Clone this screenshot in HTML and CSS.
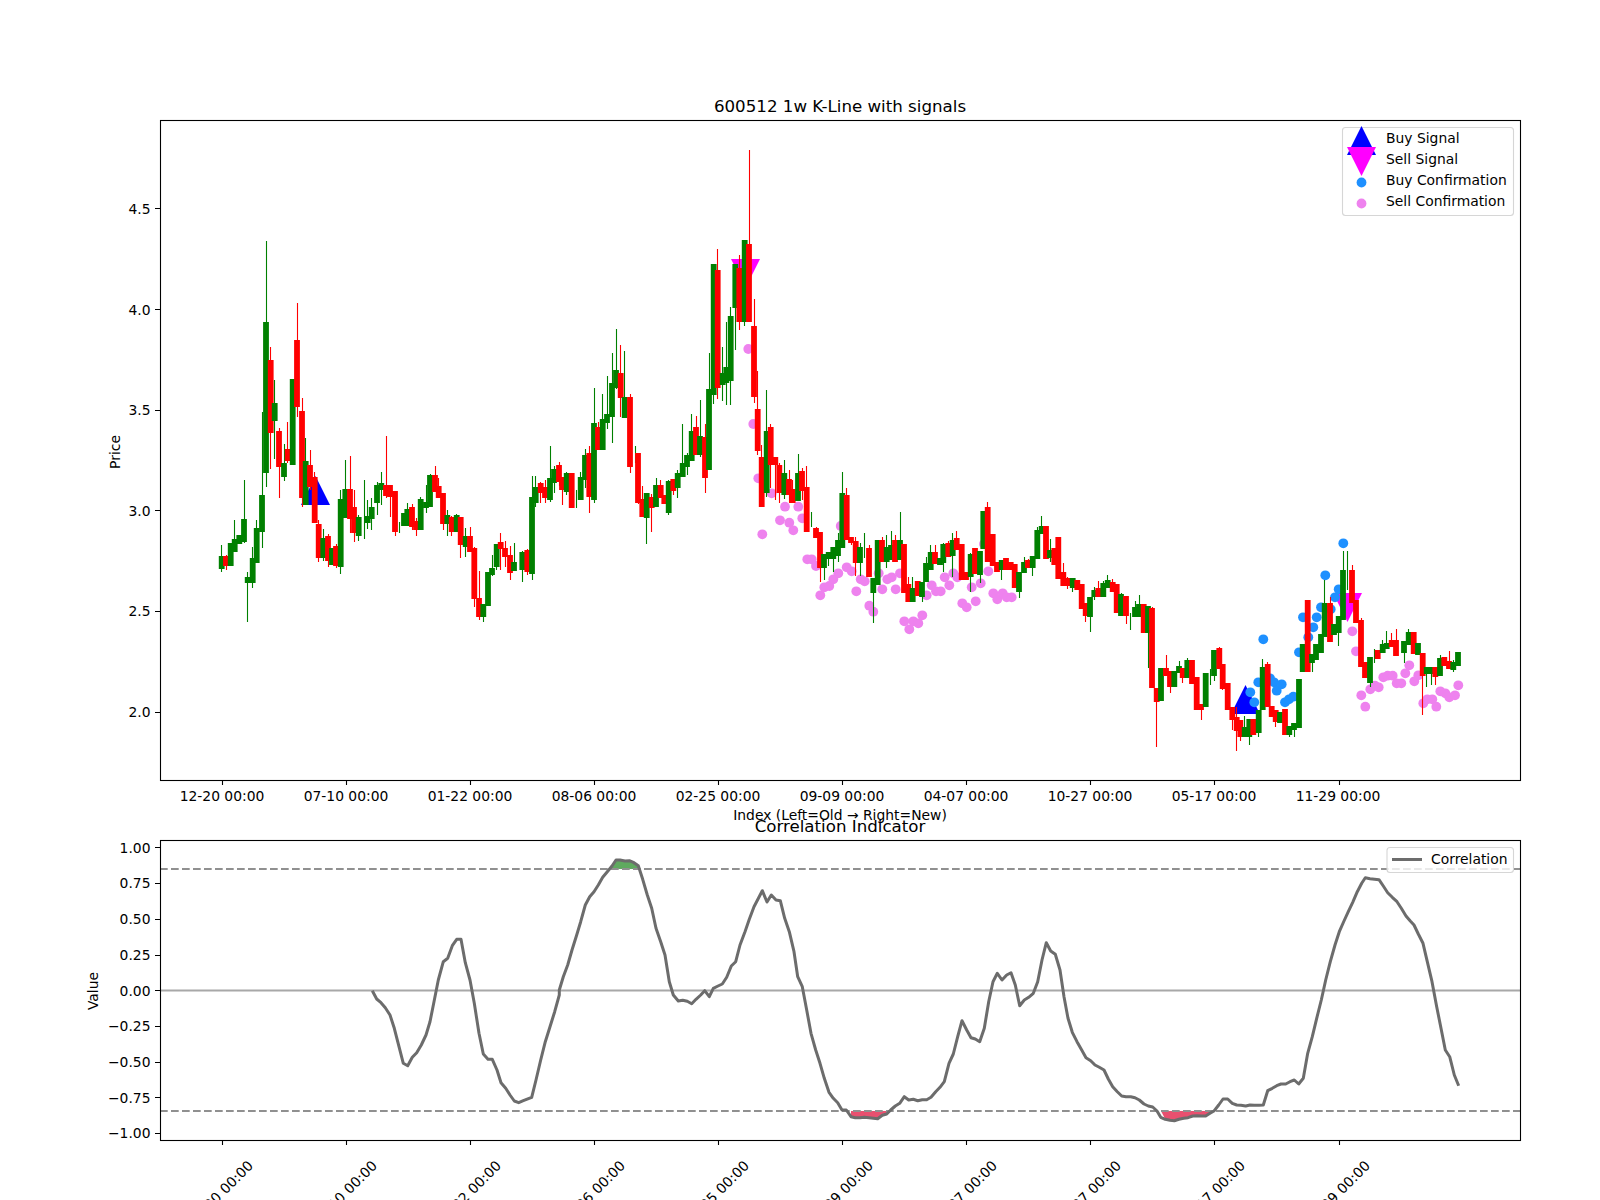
FILE: index.html
```html
<!DOCTYPE html>
<html lang="en">
<head>
<meta charset="utf-8">
<title>600512 1w K-Line with signals</title>
<link rel="stylesheet" href="styles.css">
</head>
<body>
<main class="figure">
<svg class="plot" width="1600" height="1200" viewBox="0 0 1600 1200" xmlns="http://www.w3.org/2000/svg">
  <g id="price">
    <polygon class="buy-mark" points="301,505 330,505 315.5,476"/>
    <polygon class="buy-mark" points="1231,714 1260,714 1245.5,685"/>
    <polygon class="sell-mark" points="731,259 760,259 745.5,288"/>
    <polygon class="sell-mark" points="1333,593 1362,593 1347.5,622"/>
  </g>
  <rect class="frame" x="160.5" y="120.5" width="1360" height="660"/>
  <path class="frame" d="M222.5 780v5M346.5 780v5M470.5 780v5M594.5 780v5M718.5 780v5M842.5 780v5M966.5 780v5M1090.5 780v5M1214.5 780v5M1339.5 780v5M155 208.5h5M155 309.5h5M155 410.5h5M155 510.5h5M155 611.5h5M155 712.5h5"/>
  <g class="tick x-ticks">
    <text x="222" y="801">12-20 00:00</text><text x="346" y="801">07-10 00:00</text><text x="470" y="801">01-22 00:00</text><text x="594" y="801">08-06 00:00</text><text x="718" y="801">02-25 00:00</text><text x="842" y="801">09-09 00:00</text><text x="966" y="801">04-07 00:00</text><text x="1090" y="801">10-27 00:00</text><text x="1214" y="801">05-17 00:00</text><text x="1338" y="801">11-29 00:00</text>
  </g>
  <g class="tick y-ticks">
    <text x="150.5" y="213.5">4.5</text><text x="150.5" y="314.5">4.0</text><text x="150.5" y="415">3.5</text><text x="150.5" y="515.5">3.0</text><text x="150.5" y="616">2.5</text><text x="150.5" y="716.5">2.0</text>
  </g>
  <text class="tick y-label" transform="translate(120 452) rotate(-90)">Price</text>
  <text class="title" x="840" y="112">600512 1w K-Line with signals</text>
  <text class="tick x-label" x="840" y="820">Index (Left=Old → Right=New)</text>

  <rect class="legend-box" x="1342.5" y="127.5" width="171" height="88" rx="3"/>
  <polygon class="buy-mark" points="1347,155 1376,155 1361.5,126"/>
  <polygon class="sell-mark" points="1347,147 1376,147 1361.5,176"/>
  <circle class="buy-dot" cx="1361.5" cy="182.5" r="4.9"/>
  <circle class="sell-dot" cx="1361.5" cy="203.5" r="4.9"/>
  <g class="tick legend-text">
    <text x="1386" y="143">Buy Signal</text><text x="1386" y="164">Sell Signal</text><text x="1386" y="185">Buy Confirmation</text><text x="1386" y="206">Sell Confirmation</text>
  </g>

  <text class="title" x="840" y="832">Correlation Indicator</text>
  <g id="corr">
    <polygon id="fill-high" class="fill-high"/>
    <polygon id="fill-low-a" class="fill-low"/>
    <polygon id="fill-low-b" class="fill-low"/>
    <path class="zero" d="M160 990.5H1520"/>
    <path class="guide" d="M160 869H1520M160 1111H1520"/>
    <polyline id="corr-line" class="corr-line"/>
  </g>
  <rect class="frame" x="160.5" y="840.5" width="1360" height="300"/>
  <path class="frame" d="M222.5 1140v5M346.5 1140v5M470.5 1140v5M594.5 1140v5M718.5 1140v5M842.5 1140v5M966.5 1140v5M1090.5 1140v5M1214.5 1140v5M1339.5 1140v5M155 847.5h5M155 883.5h5M155 919.5h5M155 955.5h5M155 990.5h5M155 1026.5h5M155 1062.5h5M155 1097.5h5M155 1133.5h5"/>
  <g class="tick y-ticks">
    <text x="150.5" y="852.5">1.00</text><text x="150.5" y="888">0.75</text><text x="150.5" y="923.5">0.50</text><text x="150.5" y="960">0.25</text><text x="150.5" y="995.5">0.00</text><text x="150.5" y="1031">−0.25</text><text x="150.5" y="1066.5">−0.50</text><text x="150.5" y="1102.5">−0.75</text><text x="150.5" y="1138">−1.00</text>
  </g>
  <text class="tick y-label" transform="translate(98 991) rotate(-90)">Value</text>
  <g class="tick x-ticks">
    <text transform="translate(220.5 1193) rotate(-45)" y="5">12-20 00:00</text>
    <text transform="translate(344.5 1193) rotate(-45)" y="5">07-10 00:00</text>
    <text transform="translate(468.5 1193) rotate(-45)" y="5">01-22 00:00</text>
    <text transform="translate(592.5 1193) rotate(-45)" y="5">08-06 00:00</text>
    <text transform="translate(716.5 1193) rotate(-45)" y="5">02-25 00:00</text>
    <text transform="translate(840.5 1193) rotate(-45)" y="5">09-09 00:00</text>
    <text transform="translate(964.5 1193) rotate(-45)" y="5">04-07 00:00</text>
    <text transform="translate(1088.5 1193) rotate(-45)" y="5">10-27 00:00</text>
    <text transform="translate(1212.5 1193) rotate(-45)" y="5">05-17 00:00</text>
    <text transform="translate(1337.5 1193) rotate(-45)" y="5">11-29 00:00</text>
  </g>
  <rect class="legend-box" x="1387" y="847.5" width="126.5" height="25" rx="3"/>
  <path class="corr-line" d="M1392 859.5h30"/>
  <text class="tick legend-text" x="1431" y="864">Correlation</text>
</svg>
</main>
<script src="chart.js"></script>
</body>
</html>
```
FILE: styles.css
```css
html, body {
  margin: 0;
  padding: 0;
  background: #fff;
}
.figure {
  width: 1600px;
  height: 1200px;
  overflow: hidden;
}
.plot {
  display: block;
  font-family: "DejaVu Sans", sans-serif;
}
.frame {
  fill: none;
  stroke: #000;
  stroke-width: 1.1;
}
.tick {
  font-size: 13.89px;
  fill: #000;
}
.x-ticks, .x-label, .y-label {
  text-anchor: middle;
}
.y-ticks {
  text-anchor: end;
}
.legend-text {
  text-anchor: start;
}
.title {
  font-size: 16.67px;
  fill: #000;
  text-anchor: middle;
}
.legend-box {
  fill: rgba(255, 255, 255, 0.8);
  stroke: #d6d6d6;
  stroke-width: 1.1;
}
.buy-mark {
  fill: #0000ff;
}
.sell-mark {
  fill: #ff00ff;
}
.buy-dot {
  fill: #1e90ff;
}
.sell-dot {
  fill: #ee82ee;
}
.wick-g {
  stroke: #008000;
  stroke-width: 1.1;
}
.wick-r {
  stroke: #ff0000;
  stroke-width: 1.1;
}
.body-g {
  fill: #008000;
}
.body-r {
  fill: #ff0000;
}
.zero {
  stroke: #a8a8a8;
  stroke-width: 2.08;
  fill: none;
}
.guide {
  stroke: #909090;
  stroke-width: 2.08;
  stroke-dasharray: 7.7 3.3;
  fill: none;
}
.corr-line {
  stroke: #6c6c6c;
  stroke-width: 3;
  stroke-linejoin: round;
  fill: none;
}
.fill-high {
  fill: #5faa5f;
}
.fill-low {
  fill: #e8506f;
}
```
FILE: chart.js
```js
// Weekly candles: x, colour, body top, body bottom, wick top, wick bottom (plot pixels).
const CANDLES = `
221.7 g 556 569 545 572
226 r 556 566 555 570
230.7 g 543 566 543 566
234.7 g 539 552 520 552
239.3 g 535 544 535 544
244 g 519 542 480 543
247.7 g 577 583 572 622
252.7 g 558 583 547 588
256.7 g 528 563 520 563
262 g 495 532 412 548
266 g 322 473 241 487
270.7 r 360 433 347 469
274.7 g 403 421 380 459
279 r 431 467 428 498
284 g 463 477 444 481
287.7 r 449 461 422 463
292.7 g 379 465 379 465
297 r 340 407 303 417
302 r 411 498 398 507
305.7 g 461 505 438 505
310 r 465 487 450 490
314.7 r 477 523 472 523
318.7 r 524 558 520 562
323.3 g 538 558 529 561
328 r 536 561 534 567
332 g 548 565 548 565
336 r 546 566 544 568
340.7 g 499 567 490 574
345.3 g 489 518 460 518
350 r 489 519 456 533
354 r 507 533 490 542
358.7 g 517 536 515 541
364 g 516 516 480 539
367.7 g 516 523 500 529
371.7 g 507 519 498 530
377 g 485 503 482 515
381.3 g 483 490 472 505
386 r 485 496 436 498
390 r 485 497 485 517
395 r 491 532 491 536
399.3 g 524 524 522 533
404 g 513 526 513 526
407.3 g 509 526 503 526
412 r 507 527 504 530
416 r 521 530 518 536
420.7 g 499 530 497 530
426 g 502 508 485 513
430 g 475 507 474 507
435 r 475 492 466 492
438.7 r 486 498 478 498
443 r 493 524 493 530
447.3 g 515 524 510 536
451.7 r 517 532 516 536
456.7 g 515 532 514 532
460.7 r 517 545 517 558
465.7 g 536 547 528 557
470 r 536 552 527 552
474.3 r 548 599 547 607
479 r 598 617 571 620
483.3 g 604 617 604 622
488 g 572 606 572 606
492 g 568 575 555 576
496.7 g 544 567 544 570
500.7 r 542 549 533 570
505 r 548 557 541 567
510 r 555 573 546 580
514 g 562 571 543 571
522.3 g 552 570 551 582
527.3 r 550 572 549 575
532 g 497 574 476 580
535.7 g 487 503 476 507
540.7 r 483 493 482 503
545 r 487 498 480 503
550 g 478 500 446 502
554 g 469 483 466 493
559 r 465 482 462 486
562 r 477 490 477 505
566.7 g 473 492 472 495
571.7 r 473 508 473 508
576.7 g 490 490 490 508
580.7 g 477 500 472 500
585 g 455 480 449 488
589.3 r 453 497 446 513
594 g 423 500 388 503
598 r 427 450 422 450
602.7 g 419 450 394 450
607 g 414 423 376 429
612 g 383 417 353 443
616 g 370 388 329 389
620.7 r 373 398 345 417
624.7 g 397 418 351 418
630 r 397 467 394 473
635 g 446 446 446 463
638 r 453 503 453 504
642.3 r 499 517 486 517
646.7 g 493 518 493 544
651.7 r 497 508 494 532
656 g 485 507 478 507
660.7 r 485 498 480 498
664.3 r 495 504 495 504
668.7 g 481 513 480 515
673.3 r 479 491 479 495
677.7 g 473 488 470 498
682.7 g 463 477 424 477
687 g 455 467 453 475
691.7 g 431 461 414 461
696 r 427 455 416 455
700 g 436 455 400 457
705 r 437 478 424 493
709 g 389 470 353 470
713.7 g 264 395 264 404
717.7 r 270 388 249 399
722.7 g 373 385 347 401
726.3 g 367 383 322 405
730.7 g 316 381 307 405
735.3 g 264 308 264 350
739.3 r 268 322 255 330
744.7 g 240 322 240 326
749 r 244 322 150 322
754 r 326 397 299 403
757.7 r 409 451 371 455
761.7 r 457 507 445 507
766.7 g 431 493 390 497
770.7 r 427 465 424 488
775.3 r 457 465 457 500
779.3 r 465 493 463 503
784.3 g 473 495 460 499
789 r 479 495 470 503
792.7 r 489 503 480 503
798 g 473 501 454 501
802 r 471 491 468 500
806.7 r 487 532 466 532
811 g 512 512 512 527
816 r 528 538 527 538
820 r 532 568 532 582
824 g 554 568 554 580
828.7 g 552 559 552 566
833.3 g 547 559 547 572
838 g 540 556 533 562
842.3 g 493 548 472 548
846.7 r 495 540 488 540
851 r 537 543 537 545
855.7 r 541 563 537 576
860 g 547 563 543 576
864 g 533 533 533 558
869 r 548 577 545 577
873.3 g 578 593 578 623
877.7 g 540 585 540 585
882 r 540 562 537 562
886.7 g 547 562 535 568
891 g 545 560 531 560
895 r 540 562 535 562
900 g 540 560 512 560
904 r 544 593 544 593
908.3 r 584 602 577 602
912.7 g 588 602 577 602
917.7 r 581 596 581 596
922 g 582 597 582 602
926 g 563 582 557 582
930.7 g 552 570 545 570
935 r 552 564 545 564
940 g 558 565 558 565
943.3 g 544 563 543 572
948.3 r 543 557 541 557
952.7 g 540 556 533 577
956.7 r 538 550 531 550
961.7 r 544 580 544 580
966 r 572 580 572 580
970.7 g 554 577 553 592
975 r 548 574 548 574
980 g 551 575 551 583
983.3 g 511 549 511 549
987.7 r 507 562 502 562
992.7 r 534 566 534 566
997 r 562 572 562 572
1001.7 g 560 570 560 580
1006 r 558 570 558 570
1010.7 r 562 570 562 570
1014.7 r 564 588 564 588
1019 g 572 592 572 598
1024 g 562 573 557 573
1028 r 560 568 559 568
1032.7 g 556 568 556 576
1037.3 g 530 559 527 559
1041.7 g 526 534 516 534
1046 r 526 559 526 559
1050 g 550 558 539 562
1054.3 r 548 565 548 565
1058.3 r 537 579 537 579
1063.3 r 572 586 563 586
1067.7 r 578 586 577 589
1072.7 g 578 588 578 592
1077.3 r 580 590 580 590
1081.7 r 584 609 584 609
1085.7 r 603 616 603 622
1090 g 597 617 597 632
1094.3 g 590 597 587 600
1098.3 r 588 597 581 597
1103.3 g 583 597 581 597
1107.7 g 580 588 575 588
1112.7 r 582 592 579 592
1116.7 r 584 613 584 613
1121 g 594 616 593 616
1126 r 596 616 596 624
1130.3 g 613 613 613 630
1135 g 607 617 601 617
1139 g 604 617 595 617
1143.7 r 604 633 604 633
1148 g 606 633 606 668
1152 r 608 688 607 688
1156.7 r 688 702 688 747
1161 g 668 701 668 701
1166 r 668 676 655 676
1170 r 671 687 671 693
1174.3 g 671 687 671 687
1179 g 666 673 661 673
1182.7 r 668 678 668 683
1187.3 g 660 678 658 678
1192 r 660 684 660 684
1196.7 r 677 710 677 710
1201 r 704 710 704 720
1205.7 g 673 707 673 707
1210 g 669 669 669 685
1214 g 650 676 650 681
1219.3 r 648 669 647 669
1222.7 r 664 689 664 690
1227.7 r 683 710 683 710
1232.3 r 707 720 707 730
1236.7 r 717 731 707 751
1240.3 r 720 737 720 741
1244.7 g 727 737 716 737
1249.3 g 719 737 719 745
1253.3 r 719 735 719 735
1258.7 g 710 733 710 737
1262.7 g 667 710 659 710
1267.7 r 664 707 662 707
1271.7 r 706 717 706 717
1275.7 r 710 722 710 727
1280 g 712 723 712 723
1285 r 709 735 709 735
1289.3 g 726 735 726 737
1294 g 723 730 723 737
1299 g 679 728 679 728
1302.7 g 644 672 644 672
1307.7 r 600 672 600 672
1312 g 654 663 654 672
1316 g 644 660 644 660
1321 g 634 653 634 653
1324.7 g 603 637 580 637
1330 r 603 642 597 642
1334 g 624 635 624 635
1338.7 g 616 633 616 646
1343 g 570 620 551 620
1347 g 551 551 551 590
1352 r 570 603 565 603
1356 r 600 623 600 623
1361 r 620 667 618 667
1365 r 662 678 662 678
1370 g 657 683 657 687
1374.7 g 649 649 649 663
1377.7 r 650 659 650 659
1382.7 g 644 653 640 653
1386.7 g 643 649 631 649
1391.7 r 640 647 633 647
1396 r 640 656 629 656
1404 g 641 653 641 663
1408.7 g 632 645 629 645
1413.7 r 632 654 632 654
1418 g 643 655 643 655
1422.7 r 653 676 653 715
1426.7 g 667 674 667 687
1431.3 g 667 674 667 685
1435.3 r 667 677 667 685
1440 g 658 676 655 676
1444.3 r 657 666 657 666
1449 r 661 669 651 669
1453.3 g 662 670 660 672
1458 g 652 666 652 666
`;

const SELL_DOTS = [[748.3,349],[753.3,424],[758.3,478.3],[762.3,534.3],[771.7,493.3],[785,506.7],[798.3,506.7],[780,520.3],[789.3,522.7],[793.3,530.3],[802.3,518.3],[807.3,559.3],[811.7,559.3],[816,566],[820.3,595.3],[824.3,587.3],[829.3,586],[833.3,579.3],[838.3,573.3],[846.7,567.3],[851.7,571.3],[840.7,526],[856.3,591.3],[860.7,579.3],[864.7,581.3],[869.3,605.7],[873.3,611.7],[878.7,573.3],[882.3,589.3],[887.3,579.3],[891.7,577.3],[895.7,589.3],[900,573.3],[904.3,621.3],[909.3,629.3],[913.3,621.3],[918.3,623.3],[922.3,615.3],[926.7,595.3],[931.7,585.3],[936,591.3],[940.7,591.3],[944.7,577.3],[949.3,585.3],[953.3,573.3],[957.3,577.3],[962.3,603.3],[966.7,607.3],[971.7,587.3],[975.7,601.3],[980.7,583.3],[984,544],[988.3,571.3],[993.3,593.3],[997.3,599.3],[1002.7,593.3],[1006.7,597.3],[1011.7,597.3],[1352.3,631.3],[1356,651.3],[1361.3,695.3],[1365.3,706.7],[1370.3,689.3],[1375,685.7],[1378.7,687.3],[1383.3,677.3],[1387.7,675.7],[1392.7,675.7],[1396.7,683.3],[1401.3,683.3],[1405.3,673.3],[1409.3,665.3],[1414.3,681.3],[1418.3,675.3],[1423.3,703.3],[1427.3,699.3],[1432.3,699.3],[1436.3,706.7],[1440.3,691.3],[1445.3,693.3],[1449.3,697.3],[1455,695.3],[1458.3,685.3]];

const BUY_DOTS = [[1263.3,639.3],[1258.3,682.3],[1250.3,692.3],[1254.3,702.3],[1270,678.3],[1274,682.3],[1276.7,690.7],[1281.7,684.3],[1285,702.3],[1289,699.3],[1293.3,696.7],[1299,652.3],[1303,617.3],[1308.3,637.3],[1313.3,627.3],[1316.7,617.3],[1321,607.3],[1325.3,575.3],[1330.7,609.3],[1335,597.3],[1338.7,589.3],[1343.3,543.3]];

// Correlation curve, sampled at 3x in three spans: [left, top, points].
const CORR = [
  [60, 780, [937,632,950,657,963,668,976,683,990,705,1003,745,1017,800,1030,850,1043,857,1057,832,1070,818,1084,795,1098,765,1110,725,1122,665,1135,600,1150,545,1163,535,1177,497,1190,478,1203,478,1216,548,1230,600,1243,670,1257,760,1270,822,1284,838,1297,838,1311,870,1323,908,1337,925,1350,945,1363,963,1376,968,1390,962,1415,952,1428,900,1442,840,1456,785,1470,740,1484,695,1498,645]],
  [550, 780, [28,630,40,590,53,555,66,510,80,465,92,425,106,375,119,350,132,335,145,315,158,292,172,275,186,258,198,240,210,240,225,243,238,242,252,248,265,257,278,298,292,345,305,385,318,445,332,485,345,525,358,605,370,645,385,663,398,661,412,664,425,671,438,658,452,645,464,632,478,650,490,625,504,618,517,612,530,592,544,558,557,545,570,495,585,455,598,418,612,380,637,332,651,366,664,345,678,360,691,362,704,415,718,455,732,515,743,590,757,620,770,690,783,760,797,810,810,850,823,895,837,937,850,955,863,968,876,990,889,990,903,1010,916,1013,930,1013,943,1012,957,1013,983,1016,997,1006,1010,1002,1022,990,1036,978,1049,970,1063,950,1076,960,1090,958,1103,962,1117,959,1130,959,1143,952,1157,935,1170,922,1183,905,1197,850,1210,822,1223,770,1236,722,1250,750,1263,773,1276,777,1289,785,1303,745,1316,665,1329,605,1342,580,1356,600,1370,585,1383,578,1396,615,1409,677,1423,660,1436,652,1450,640,1463,605,1476,540,1489,488]],
  [1040, 780, [32,513,46,523,60,570,72,650,84,715,97,757,111,785,125,810,138,833,152,842,165,855,178,862,192,870,205,897,218,920,232,935,245,948,258,950,272,950,285,953,298,960,312,972,325,978,338,981,351,993,362,1012,376,1018,390,1021,403,1022,417,1018,431,1015,444,1013,458,1008,471,1007,484,1008,497,1008,510,1000,523,992,536,975,549,957,563,957,577,970,590,975,603,976,617,978,630,975,643,976,657,976,670,975,683,932,697,925,710,917,723,912,737,912,750,905,763,900,776,912,790,895,803,820,817,770,830,715,844,660,857,600,871,545,885,495,898,455,912,423,925,395,938,367,952,335,965,310,976,293,990,296,1017,299,1030,318,1043,338,1057,352,1071,365,1084,385,1098,408,1111,423,1122,435,1135,462,1149,490,1163,550,1176,605,1190,680,1203,745,1216,810,1229,830,1243,885,1256,917]]
];

const NS = 'http://www.w3.org/2000/svg';

function add(parent, tag, attrs) {
  const el = document.createElementNS(NS, tag);
  for (const key in attrs) el.setAttribute(key, attrs[key]);
  parent.appendChild(el);
  return el;
}

const price = document.getElementById('price');

SELL_DOTS.forEach(([cx, cy]) => add(price, 'circle', { class: 'sell-dot', cx, cy, r: 4.9 }));
BUY_DOTS.forEach(([cx, cy]) => add(price, 'circle', { class: 'buy-dot', cx, cy, r: 4.9 }));

CANDLES.trim().split('\n').forEach((line) => {
  const [xs, c, top, bot, wt, wb] = line.split(' ');
  const x = +xs;
  const wx = Math.floor(x) + 0.5;
  add(price, 'line', { class: 'wick-' + c, x1: wx, x2: wx, y1: wt, y2: wb });
  if (+bot > +top) {
    add(price, 'rect', { class: 'body-' + c, x: x - 2.9, y: top, width: 5.8, height: bot - top });
  }
});

const toPlot = ([left, top, raw]) => {
  const pts = [];
  for (let i = 0; i < raw.length; i += 2) {
    pts.push([left + raw[i] / 3, top + raw[i + 1] / 3]);
  }
  return pts;
};

const curve = CORR.flatMap(toPlot);
const fmt = (pts) => pts.map((p) => p[0].toFixed(1) + ',' + p[1].toFixed(1)).join(' ');
document.getElementById('corr-line').setAttribute('points', fmt(curve));

function fillBetween(id, x1, x2, y) {
  const inside = curve.filter((p) => p[0] >= x1 && p[0] <= x2);
  const pts = [[x1, y], ...inside, [x2, y]];
  document.getElementById(id).setAttribute('points', fmt(pts));
}

fillBetween('fill-high', 612, 639, 869);
fillBetween('fill-low-a', 851, 887, 1111);
fillBetween('fill-low-b', 1161, 1210, 1111);
```
